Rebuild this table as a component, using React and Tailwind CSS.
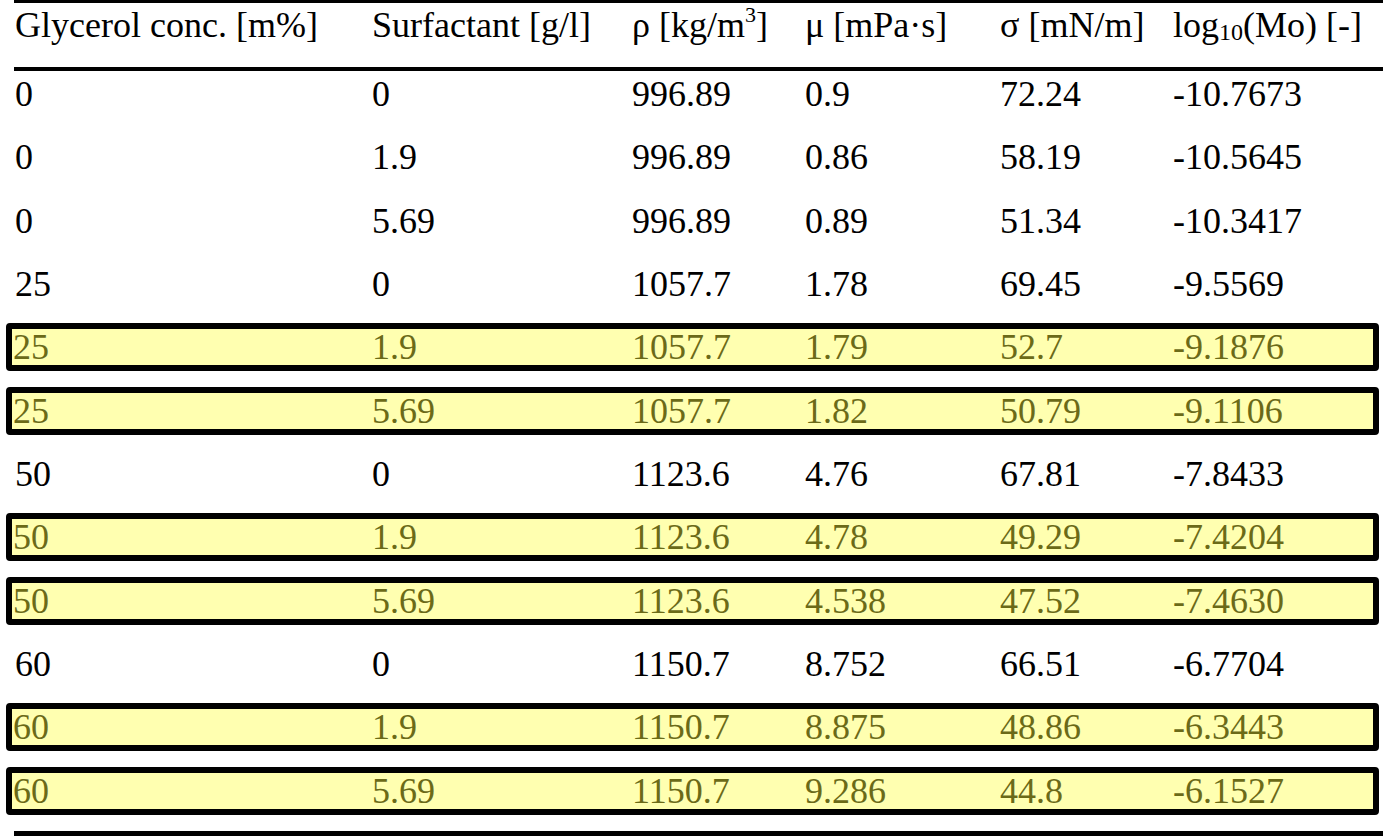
import React from "react";

const rows = [
  ["0", "0", "996.89", "0.9", "72.24", "-10.7673", false],
  ["0", "1.9", "996.89", "0.86", "58.19", "-10.5645", false],
  ["0", "5.69", "996.89", "0.89", "51.34", "-10.3417", false],
  ["25", "0", "1057.7", "1.78", "69.45", "-9.5569", false],
  ["25", "1.9", "1057.7", "1.79", "52.7", "-9.1876", true],
  ["25", "5.69", "1057.7", "1.82", "50.79", "-9.1106", true],
  ["50", "0", "1123.6", "4.76", "67.81", "-7.8433", false],
  ["50", "1.9", "1123.6", "4.78", "49.29", "-7.4204", true],
  ["50", "5.69", "1123.6", "4.538", "47.52", "-7.4630", true],
  ["60", "0", "1150.7", "8.752", "66.51", "-6.7704", false],
  ["60", "1.9", "1150.7", "8.875", "48.86", "-6.3443", true],
  ["60", "5.69", "1150.7", "9.286", "44.8", "-6.1527", true],
];

const cols = "grid grid-cols-[357px_260px_173px_195px_173px_1fr]";

export default function App() {
  return (
    <div
      className="w-[1383px] h-[840px] bg-white overflow-hidden text-black text-[36px] leading-[36px]"
      style={{ fontFamily: '"Liberation Serif", "Times New Roman", serif' }}
    >
      <div className="ml-[14px] h-[3px] bg-black" />
      <div className={`${cols} pl-[15px] pt-[4px] h-[64px] whitespace-nowrap`}>
        <div>Glycerol conc. [m%]</div>
        <div>Surfactant [g/l]</div>
        <div>
          ρ [kg/m<sup className="text-[22px] relative top-[-15px] align-baseline">3</sup>]
        </div>
        <div>μ [mPa·s]</div>
        <div>σ [mN/m]</div>
        <div>
          log<sub className="text-[24px] relative top-[3px] align-baseline">10</sub>(Mo) [-]
        </div>
      </div>
      <div className="ml-[14px] h-[4px] bg-black" />
      <div className="-mt-px flex flex-col gap-[15.33px] ml-[6px] w-[1373px]">
        {rows.map((r, i) => (
          <div
            key={i}
            className={
              r[6]
                ? `${cols} h-[48px] border-[6px] border-black rounded-[4px] bg-[#ffffb0] text-[#6b6a18] pl-px`
                : `${cols} h-[48px] border-[6px] border-transparent pl-[3px]`
            }
          >
            {r.slice(0, 6).map((c, j) => (
              <div key={j} className={j === 0 && r[6] ? "" : j === 0 ? "" : r[6] ? "pl-[2px]" : ""}>
                {c}
              </div>
            ))}
          </div>
        ))}
      </div>
      <div className="ml-[14px] mt-[16.3px] h-[5px] bg-black" />
    </div>
  );
}
